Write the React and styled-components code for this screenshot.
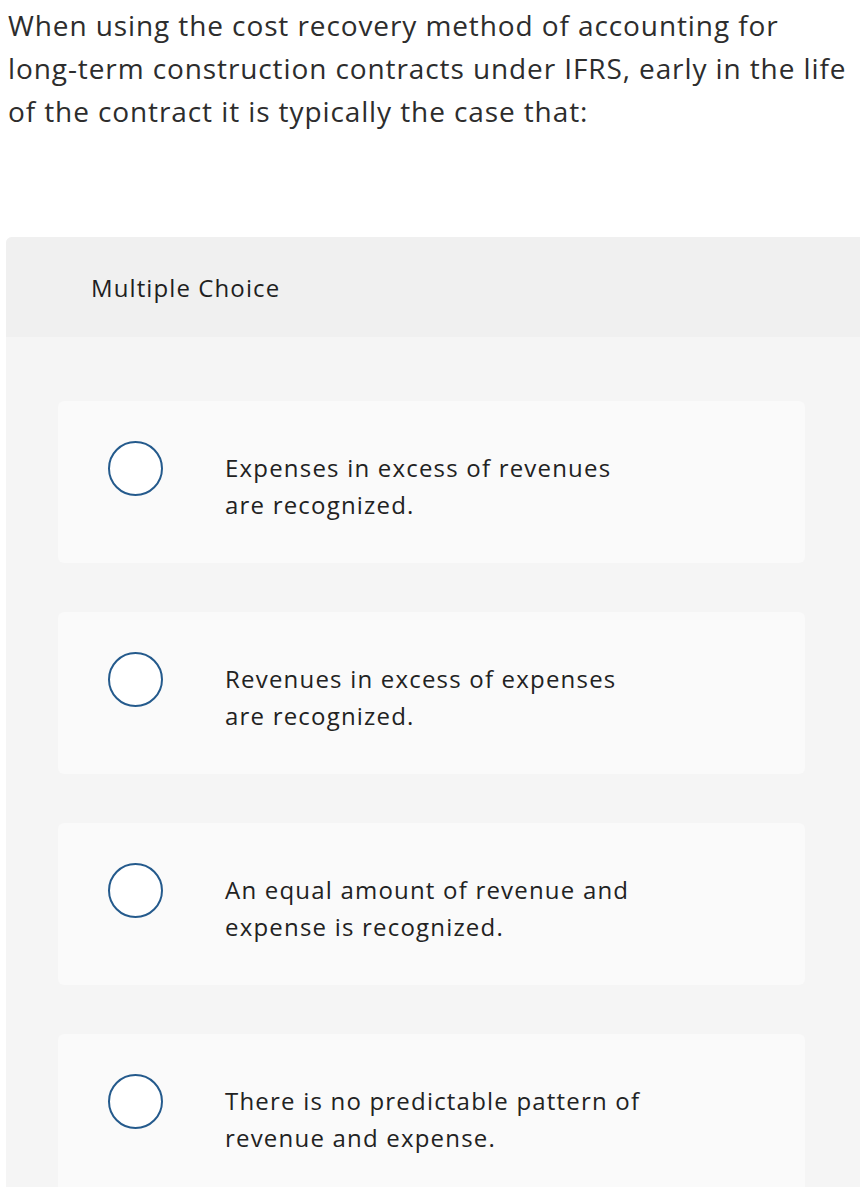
import React from "react";
import styled, { createGlobalStyle } from "styled-components";

const GlobalStyle = createGlobalStyle`
  html, body {
    margin: 0;
    padding: 0;
    background: #ffffff;
  }
  body {
    font-family: "Open Sans", "Noto Sans", sans-serif;
    color: #222222;
  }
`;

const Page = styled.div`
  width: 860px;
  padding-top: 4px;
`;

const Question = styled.p`
  margin: 0 0 0 8px;
  font-size: 28px;
  line-height: 43px;
  letter-spacing: 0.9px;
  color: #2d2d2d;
  max-width: 845px;
`;

const Panel = styled.div`
  margin: 104px 0 0 6px;
  background: #f5f5f5;
  border-radius: 6px 0 0 0;
  overflow: hidden;
`;

const Header = styled.div`
  height: 100px;
  background: #f0f0f0;
  display: flex;
  align-items: center;
  padding-left: 85px;
  font-size: 24px;
  letter-spacing: 1.1px;
  color: #1f1f1f;
`;

const Options = styled.div`
  display: flex;
  flex-direction: column;
  gap: 49px;
  padding: 64px 55px 0 52px;
`;

const Card = styled.label`
  display: flex;
  align-items: flex-start;
  gap: 62px;
  height: 162px;
  box-sizing: border-box;
  padding: 48px 50px 0 50px;
  background: #fafafa;
  border-radius: 6px;
  cursor: pointer;
`;

const Radio = styled.span`
  flex: none;
  width: 55px;
  height: 55px;
  box-sizing: border-box;
  margin-top: -8px;
  border: 2px solid #245a8c;
  border-radius: 50%;
  background: #ffffff;
`;

const OptionText = styled.span`
  font-size: 24px;
  line-height: 37px;
  letter-spacing: 1.2px;
  color: #222222;
  max-width: 428px;
`;

const choices = [
  "Expenses in excess of revenues are recognized.",
  "Revenues in excess of expenses are recognized.",
  "An equal amount of revenue and expense is recognized.",
  "There is no predictable pattern of revenue and expense.",
];

const App = () => {
  return (
    <Page>
      <GlobalStyle />
      <Question>
        When using the cost recovery method of accounting for long-term
        construction contracts under IFRS, early in the life of the contract
        it is typically the case that:
      </Question>
      <Panel>
        <Header>Multiple Choice</Header>
        <Options>
          {choices.map((c) => (
            <Card key={c}>
              <Radio />
              <OptionText>{c}</OptionText>
            </Card>
          ))}
        </Options>
      </Panel>
    </Page>
  );
};

export default App;
